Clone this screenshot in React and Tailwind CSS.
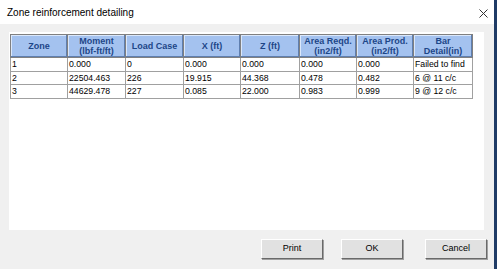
import React from "react";

// Zone reinforcement detailing dialog
const cols = [
  { label: ["Zone"], w: "w-[57px]" },
  { label: ["Moment", "(lbf-ft/ft)"], w: "w-[58px]" },
  { label: ["Load Case"], w: "w-[58px]" },
  { label: ["X (ft)"], w: "w-[57px]" },
  { label: ["Z (ft)"], w: "w-[59px]" },
  { label: ["Area Reqd.", "(in2/ft)"], w: "w-[57px]" },
  { label: ["Area Prod.", "(in2/ft)"], w: "w-[57px]" },
  { label: ["Bar", "Detail(in)"], w: "w-[59px]" },
];

const rows = [
  ["1", "0.000", "0", "0.000", "0.000", "0.000", "0.000", "Failed to find"],
  ["2", "22504.463", "226", "19.915", "44.368", "0.478", "0.482", "6 @ 11 c/c"],
  ["3", "44629.478", "227", "0.085", "22.000", "0.983", "0.999", "9 @ 12 c/c"],
];

function Button({ children, className = "" }) {
  return (
    <button className={`w-[62px] h-[20px] bg-[#e1e1e1] border border-t-white border-l-white border-r-[#696969] border-b-[#696969] shadow-[1px_1px_0_#a0a0a0] text-[9px] text-black font-['Liberation_Sans',Arial,sans-serif] ${className}`}>
      {children}
    </button>
  );
}

export default function App() {
  return (
    <div className="w-[497px] h-[269px] flex flex-col bg-[#f0f0f0] border-r-[3px] border-r-[#1f3b66] font-['Liberation_Sans',Arial,sans-serif]">
      {/* title bar */}
      <div className="h-[24px] bg-white flex items-center justify-between pl-[7px] pr-[6px]">
        <span className="text-[10px] text-black font-['Liberation_Sans',Arial,sans-serif]">Zone reinforcement detailing</span>
        <svg width="9" height="9" viewBox="0 0 9 9" className="mt-[2px]">
          <path d="M0.5 0.5 L8.5 8.5 M8.5 0.5 L0.5 8.5" stroke="#333" strokeWidth="1" />
        </svg>
      </div>

      {/* white list panel */}
      <div className="ml-[9px] mt-[8px] w-[475px] h-[198px] bg-white pt-[2px] pl-[1px]">
        <table className="table-fixed border-collapse border border-[#808080] w-[462px]">
          <thead>
            <tr className="h-[23px]">
              {cols.map((c, i) => (
                <th
                  key={i}
                  className={`${c.w} p-0 bg-[#a4c2ef] border border-[#808080] shadow-[inset_-1px_-1px_0_#5f7fb0,inset_1px_1px_0_#dbe8fb] text-[9px] leading-[10px] font-bold text-[#1d4688] text-center align-middle`}
                >
                  {c.label.map((l, j) => (
                    <div key={j}>{l}</div>
                  ))}
                </th>
              ))}
            </tr>
          </thead>
          <tbody>
            {rows.map((r, i) => (
              <tr key={i} className="h-[13.5px]">
                {r.map((v, j) => (
                  <td
                    key={j}
                    className="p-0 pl-[1px] border border-[#a0a0a0] text-[8.7px] leading-[12px] text-black text-left whitespace-nowrap overflow-hidden"
                  >
                    {v}
                  </td>
                ))}
              </tr>
            ))}
          </tbody>
        </table>
      </div>

      {/* buttons */}
      <div className="flex justify-end pr-[7px] mt-[9px]">
        <Button>Print</Button>
        <Button className="ml-[18px]">OK</Button>
        <Button className="ml-[22px]">Cancel</Button>
      </div>
    </div>
  );
}
